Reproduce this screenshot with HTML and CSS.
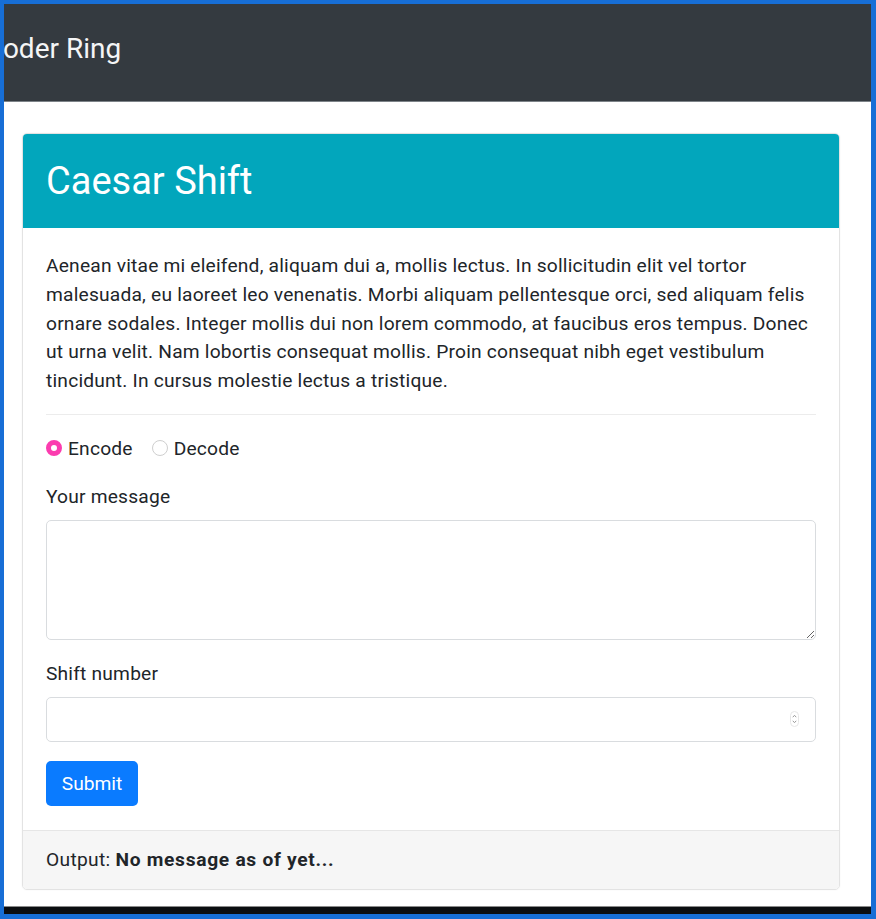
FILE: index.html
```html
<!DOCTYPE html>
<html lang="en">
<head>
<meta charset="utf-8">
<title>Decoder Ring</title>
<link rel="stylesheet" href="styles.css">
</head>
<body>
<div class="frame">
  <nav class="navbar">
    <span class="brand">Decoder Ring</span>
  </nav>
  <main class="content">
    <section class="card">
      <header class="card-header">
        <h2 class="card-title">Caesar Shift</h2>
      </header>
      <div class="card-body">
        <p class="intro">Aenean vitae mi eleifend, aliquam dui a, mollis lectus. In sollicitudin elit vel tortor malesuada, eu laoreet leo venenatis. Morbi aliquam pellentesque orci, sed aliquam felis ornare sodales. Integer mollis dui non lorem commodo, at faucibus eros tempus. Donec ut urna velit. Nam lobortis consequat mollis. Proin consequat nibh eget vestibulum tincidunt. In cursus molestie lectus a tristique.</p>
        <hr class="divider">
        <form class="form">
          <div class="radios">
            <label class="radio"><span class="dot dot-on"></span>Encode</label>
            <label class="radio"><span class="dot"></span>Decode</label>
          </div>
          <div class="group">
            <label class="label" for="msg">Your message</label>
            <textarea id="msg" class="control textarea"></textarea>
          </div>
          <div class="group">
            <label class="label" for="shift">Shift number</label>
            <div class="number-wrap">
              <input id="shift" class="control input" type="text">
              <svg class="spinner" width="9" height="16" viewBox="0 0 9 16">
                <rect x="0.5" y="0.5" width="8" height="15" rx="4" fill="#fff" stroke="#e6e6e6"/>
                <path d="M2.8 6.2 L4.5 4.3 L6.2 6.2" fill="none" stroke="#9a9a9a" stroke-width="1"/>
                <path d="M2.8 9.8 L4.5 11.7 L6.2 9.8" fill="none" stroke="#9a9a9a" stroke-width="1"/>
              </svg>
            </div>
          </div>
          <button class="btn" type="button">Submit</button>
        </form>
      </div>
      <footer class="card-footer">Output: <strong>No message as of yet...</strong></footer>
    </section>
  </main>
  <div class="bottom-bar"></div>
</div>
</body>
</html>
```

FILE: styles.css
```css
html, body {
  margin: 0;
  padding: 0;
}

body {
  font-family: "Roboto", "Helvetica", "Liberation Sans", sans-serif;
  color: #212529;
  background: #fff;
}

.frame {
  box-sizing: border-box;
  width: 876px;
  height: 919px;
  border-style: solid;
  border-color: #176ed6;
  border-width: 4px 5px 5px 4px;
  display: flex;
  flex-direction: column;
  overflow: hidden;
}

.navbar {
  height: 97px;
  flex: none;
  background: #343a40;
  border-bottom: 1px solid #7d8388;
  display: flex;
  align-items: center;
  overflow: hidden;
}

.brand {
  color: #f4f5f6;
  font-size: 28px;
  margin-left: -49px;
  white-space: nowrap;
  margin-top: -8px;
}

.content {
  flex: 1;
  padding: 31px 31px 0 18px;
}

.card {
  border: 1px solid #e3e3e3;
  border-radius: 5px;
  overflow: hidden;
  box-shadow: 0 0 2px rgba(0,0,0,0.06);
}

.card-header {
  background: #02a6bc;
  height: 94px;
  display: flex;
  align-items: center;
  padding: 0 23px;
}

.card-title {
  margin: 0;
  color: #fff;
  font-weight: 400;
  font-size: 38px;
}

.card-body {
  padding: 24px 23px 24px 23px;
}

.intro {
  margin: 0 0 18px;
  font-size: 19.2px;
  line-height: 28.8px;
  letter-spacing: 0.2px;
}

.divider {
  margin: 0 0 19px;
  border: 0;
  border-top: 1px solid #ececec;
}

.form {
  font-size: 19.2px;
}

.radios {
  display: flex;
  gap: 19px;
  height: 29px;
  align-items: center;
  margin-bottom: 19px;
}

.radio {
  display: flex;
  align-items: center;
  gap: 6px;
  line-height: 29px;
  letter-spacing: 0.2px;
}

.dot {
  box-sizing: border-box;
  width: 16px;
  height: 16px;
  border-radius: 50%;
  border: 1px solid #cfcfcf;
  background: #fff;
}

.dot-on {
  border: 5px solid #fb3caf;
  background: #fff;
}

.group {
  margin-bottom: 19px;
}

.label {
  display: block;
  line-height: 29px;
  margin-bottom: 9px;
  letter-spacing: 0.2px;
}

.control {
  box-sizing: border-box;
  display: block;
  width: 100%;
  border: 1px solid #d9dcdf;
  border-radius: 5px;
  font-family: inherit;
  font-size: 19.2px;
  background: #fff;
  margin: 0;
}

.textarea {
  height: 120px;
  resize: vertical;
}

.number-wrap {
  position: relative;
}

.input {
  height: 45px;
  padding: 0 14px;
}

.spinner {
  position: absolute;
  right: 17px;
  top: 14px;
}

.btn {
  display: block;
  width: 92px;
  height: 45px;
  border: 0;
  border-radius: 5px;
  background: #0a7bff;
  color: #fff;
  font-family: inherit;
  font-size: 19.2px;
  padding: 0;
}

.card-footer {
  background: #f6f6f6;
  border-top: 1px solid #e6e6e6;
  height: 58px;
  display: flex;
  align-items: center;
  padding: 0 23px;
  font-size: 19.2px;
  letter-spacing: 0.3px;
  white-space: pre;
}

.card-footer strong {
  font-weight: 700;
  letter-spacing: 0.7px;
}

.bottom-bar {
  flex: none;
  height: 8px;
  background: #0b0d10;
  border-top: 1px solid #8a8a8a;
  margin-top: 16px;
}
```
